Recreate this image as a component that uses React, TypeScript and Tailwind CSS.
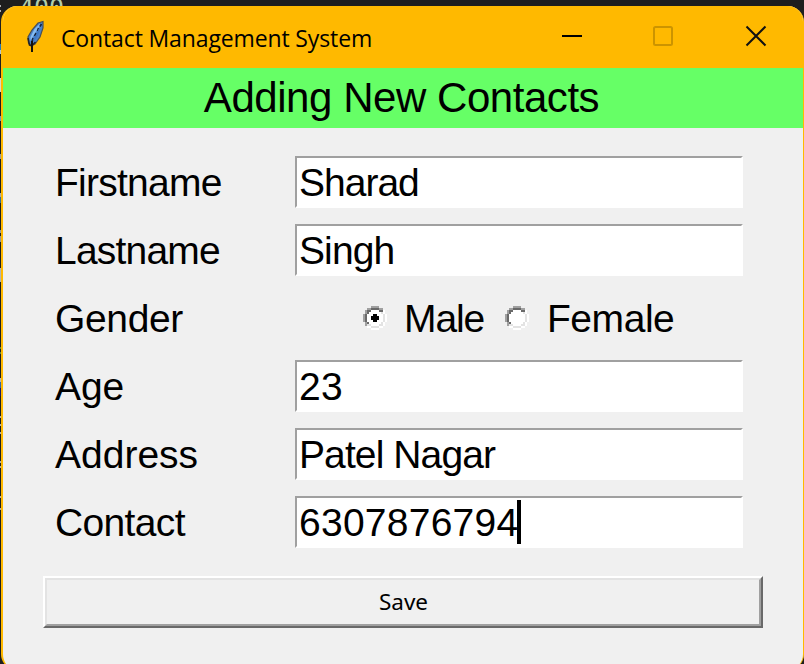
import React from "react";

const sans = "font-['Liberation_Sans',Arial,sans-serif]";

// Fragments of the editor that show along the window's left edge.
const specks = [
  { y: 5, h: 2, c: "#b0b0b0" },
  { y: 10, h: 2, c: "#b0b0b0" },
  { y: 44, h: 6, c: "#2779b5" },
  { y: 50, h: 4, c: "#b5c5d0" },
  { y: 78, h: 14, c: "#d8d8c8" },
  { y: 116, h: 5, c: "#6d9cba" },
  { y: 154, h: 5, c: "#9c9c9c" },
  { y: 193, h: 4, c: "#a9a9a9" },
  { y: 197, h: 6, c: "#356d94" },
  { y: 230, h: 3, c: "#999999" },
  { y: 236, h: 6, c: "#999999" },
  { y: 268, h: 14, c: "#b5b5b5" },
  { y: 347, h: 2, c: "#5f8a3c" },
  { y: 352, h: 2, c: "#5f8a3c" },
  { y: 378, h: 4, c: "#b9b9b9" },
  { y: 382, h: 6, c: "#3262a8" },
  { y: 388, h: 8, c: "#1b1464" },
  { y: 416, h: 2, c: "#b0b0b0" },
  { y: 424, h: 2, c: "#b0b0b0" },
  { y: 432, h: 2, c: "#b0b0b0" },
  { y: 461, h: 2, c: "#b0b0b0" },
  { y: 466, h: 2, c: "#b0b0b0" },
  { y: 496, h: 2, c: "#b0b0b0" },
  { y: 508, h: 2, c: "#b0b0b0" },
];

function Feather() {
  return (
    <svg width="20" height="34" viewBox="0 0 20 34" className="block">
      <path d="M17 1.5 L12 3 L6 10 L2 17 L2.5 23 L5 26 L9 24 L14 17 L17 8 Z" fill="#4a83ca" stroke="#4a4f55" strokeWidth="1.2" />
      <path d="M14 3.5 L8.5 9 L4.5 17 L4.5 21 L8.5 14 L13 7 Z" fill="#86bcf0" />
      <path d="M15.5 4 L14 6.5 M12.5 8 L11.5 11 M10 13 L8.5 16 M7 18 L5.5 24" fill="none" stroke="#17243c" strokeWidth="1.6" />
      <path d="M13.5 9 L11 15 L8 20" fill="none" stroke="#3d78c4" strokeWidth="1.8" />
      <path d="M2 18 L3.5 25 L6 25.5 L9.5 22" fill="none" stroke="#222222" strokeWidth="1.5" />
      <path d="M6 21 L6 32" stroke="#16120a" strokeWidth="2" />
    </svg>
  );
}

function Label({ text, spacing }: { text: string; spacing: string }) {
  return <div className={`w-[240px] pl-[2px] pt-px leading-[52px] h-[52px] whitespace-nowrap ${spacing}`}>{text}</div>;
}

function Field({ value, spacing, caret }: { value: string; spacing: string; caret?: boolean }) {
  return (
    <div className="flex h-[52px] w-[448px] items-center border-2 border-t-[#a0a0a0] border-l-[#a0a0a0] border-r-white border-b-white bg-white pl-[2px]">
      <span className={`whitespace-nowrap pt-0.5 leading-[46px] ${spacing}`}>{value}</span>
      {caret && <span className="-ml-px h-11 w-1 bg-black" />}
    </div>
  );
}

// Classic bevelled radio button on a 12-cell grid, each cell two pixels wide.
function Radio({ checked }: { checked?: boolean }) {
  return (
    <svg width="24" height="24" viewBox="0 0 12 12" shapeRendering="crispEdges" className="block shrink-0">
      <path d="M4 1h4v1h2v2h1v4h-1v2h-2v1h-4v-1h-2v-2h-1v-4h1v-2h2z" fill="white" />
      <path d="M4 0h4v1h-4z M2 1h2v1h-2z M8 1h2v1h-2z M1 2h1v2h-1z M0 4h1v4h-1z M1 8h1v2h-1z" fill="#a0a0a0" />
      <path d="M4 1h4v1h-4z M2 2h2v1h-2z M8 2h2v1h-2z M2 3h1v1h-1z M1 4h1v4h-1z M2 8h1v1h-1z" fill="#696969" />
      <path d="M9 3h1v1h-1z M10 4h1v4h-1z M9 8h1v1h-1z M2 9h2v1h-2z M8 9h2v1h-2z M4 10h4v1h-4z" fill="#e3e3e3" />
      <path d="M10 2h1v2h-1z M11 4h1v4h-1z M10 8h1v2h-1z M2 10h2v1h-2z M8 10h2v1h-2z M4 11h4v1h-4z" fill="white" />
      {checked && <path d="M5 4h2v1h1v2h-1v1h-2v-1h-1v-2h1z" fill="black" />}
    </svg>
  );
}

export default function App() {
  return (
    <div className="relative h-[664px] w-[804px] overflow-hidden bg-[#1e1e1e] pl-px pt-1.5">
      <div className="absolute left-[19px] top-[-7px] font-['DejaVu_Sans_Mono',monospace] text-[25px] leading-[29px] text-[#b5cea8]">400</div>
      {specks.map((s) => (
        <div key={s.y} className="absolute left-0 w-px" style={{ top: s.y, height: s.h, backgroundColor: s.c }} />
      ))}
      <div className="relative h-[664px] w-[803px] overflow-hidden rounded-[16px] border-l-2 border-r border-[#ffb900] bg-[#f0f0f0] text-black">
        <header className="flex h-[62px] bg-[#ffb900]">
          <div className="ml-[23px] mt-[14px]"><Feather /></div>
          <div className="ml-[15px] mt-[14px] w-[501px] whitespace-nowrap font-['Open_Sans',sans-serif] text-[23px] leading-[36px] tracking-[-0.13px]">
            Contact Management System
          </div>
          <svg width="206" height="22" viewBox="0 0 206 22" className="mt-[19px] shrink-0">
            <path d="M0 11H20" stroke="black" strokeWidth="2" />
            <rect x="92" y="2" width="18" height="18" rx="1.5" fill="none" stroke="#cc9400" strokeWidth="2" />
            <path d="M184.5 1.5L203.5 20.5M203.5 1.5L184.5 20.5" stroke="#111" strokeWidth="2" />
          </svg>
        </header>
        <h1 className={`h-[60px] bg-[#66ff66] pr-[3px] text-center text-[42px] leading-[60px] tracking-[-0.45px] ${sans}`}>
          Adding New Contacts
        </h1>
        <main className={`pl-[50px] pt-[28px] text-[39px] ${sans}`}>
          <div className="flex flex-col gap-4">
            <div className="flex">
              <Label text="Firstname" spacing="tracking-[-0.75px]" />
              <div className="ml-[2px]"><Field value="Sharad" spacing="tracking-[-1px]" /></div>
            </div>
            <div className="flex">
              <Label text="Lastname" spacing="tracking-[-0.8px]" />
              <div className="ml-[2px]"><Field value="Singh" spacing="tracking-[-0.9px]" /></div>
            </div>
            <div className="flex h-[52px] items-center">
              <Label text="Gender" spacing="tracking-[-0.35px]" />
              <div className="ml-[70px] flex items-center">
                <Radio checked />
                <span className="ml-[17px] w-[81px] whitespace-nowrap pt-0.5 tracking-[-1.1px]">Male</span>
                <span className="ml-[20px]"><Radio /></span>
                <span className="ml-[18px] whitespace-nowrap pt-0.5 tracking-[-0.45px]">Female</span>
              </div>
            </div>
            <div className="flex">
              <Label text="Age" spacing="tracking-[-0.1px]" />
              <div className="ml-[2px]"><Field value="23" spacing="tracking-[0.3px]" /></div>
            </div>
            <div className="flex">
              <Label text="Address" spacing="tracking-[0px]" />
              <div className="ml-[2px]"><Field value="Patel Nagar" spacing="tracking-[-0.9px]" /></div>
            </div>
            <div className="flex">
              <Label text="Contact" spacing="tracking-[-0.65px]" />
              <div className="ml-[2px]"><Field value="6307876794" spacing="tracking-[0.25px]" caret /></div>
            </div>
          </div>
        </main>
        <button className="ml-[40px] mt-[28px] block h-[52px] w-[720px] border-2 border-t-white border-l-white border-r-[#696969] border-b-[#696969]">
          <span className="flex h-full items-center justify-center border-2 border-t-[#e3e3e3] border-l-[#e3e3e3] border-r-[#a0a0a0] border-b-[#a0a0a0] pl-px font-['Noto_Sans',sans-serif] text-[22.5px] leading-[42px]">
            Save
          </span>
        </button>
      </div>
    </div>
  );
}
